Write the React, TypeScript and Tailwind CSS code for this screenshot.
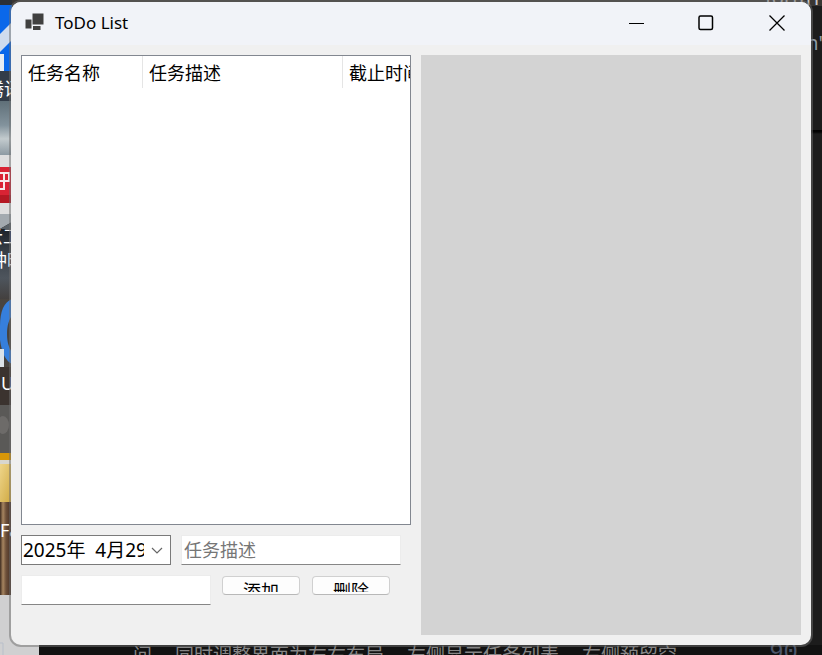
import { useState } from "react";

const columns = [
  { title: "任务名称", width: "w-[121px]" },
  { title: "任务描述", width: "w-[200px]" },
  { title: "截止时间", width: "w-[150px]" },
];

const chatLine = ["问，", "同时调整界面为左右布局，", "左侧显示任务列表，", "右侧预留空"];

const DesktopEdge = () => (
  <svg
    className="absolute left-0 top-0"
    width="39"
    height="655"
    viewBox="0 0 39 655"
    aria-hidden="true"
  >
    <defs>
      <linearGradient id="sky" x1="0" y1="0" x2="0" y2="1">
        <stop offset="0" stopColor="#5f6f78" />
        <stop offset="0.45" stopColor="#83939d" />
        <stop offset="0.7" stopColor="#c3cbce" />
        <stop offset="1" stopColor="#8d9aa3" />
      </linearGradient>
      <linearGradient id="rock" x1="0" y1="0" x2="0" y2="1">
        <stop offset="0" stopColor="#1c2229" />
        <stop offset="0.3" stopColor="#363d45" />
        <stop offset="0.7" stopColor="#4e555d" />
        <stop offset="1" stopColor="#43403f" />
      </linearGradient>
      <linearGradient id="folder" x1="0" y1="0" x2="1" y2="1">
        <stop offset="0" stopColor="#eed58b" />
        <stop offset="1" stopColor="#cfa840" />
      </linearGradient>
      <linearGradient id="wood" x1="0" y1="0" x2="1" y2="0">
        <stop offset="0" stopColor="#3d2b20" />
        <stop offset="0.25" stopColor="#a78560" />
        <stop offset="0.5" stopColor="#6d503a" />
        <stop offset="1" stopColor="#3c2820" />
      </linearGradient>
    </defs>
    <rect width="12" height="6" fill="#2b3036" />
    <rect y="5" width="12" height="66" fill="#0a68ea" />
    <path d="M0 34 12 22v18L0 52z" fill="#cfdcee" />
    <rect y="54" width="4" height="20" fill="#e8edf3" />
    <rect y="71" width="12" height="31" fill="#323c49" />
    <rect y="101" width="12" height="54" fill="url(#sky)" />
    <rect y="155" width="12" height="59" fill="#dededf" />
    <rect y="167" width="12" height="36" fill="#d92334" />
    <rect y="195" width="12" height="8" fill="#b51824" />
    <path d="M0 173h9v8H0M4 173v16H0" fill="none" stroke="#f6e9ea" strokeWidth="2" />
    <path d="M0 214h12v8L0 229z" fill="#a3aab0" />
    <path d="M12 222v8H0v-1z" fill="#5a6269" />
    <rect y="229" width="12" height="70" fill="url(#rock)" />
    <rect y="299" width="12" height="68" fill="#49443f" />
    <path
      d="M12 299C4 302 0 311 0 326v14c2 14 6 21 12 24v-12c-3-4-5-10-5-18s2-15 5-18z"
      fill="#367fdc"
    />
    <rect y="349" width="4" height="18" fill="#dce2e7" />
    <rect y="367" width="12" height="38" fill="#3b332f" />
    <rect y="405" width="12" height="48" fill="#5a5957" />
    <ellipse cx="3" cy="425" rx="6" ry="9" fill="#6d6b69" />
    <rect y="453" width="12" height="7" fill="#d79608" />
    <rect y="460" width="12" height="4" fill="#d8d6cf" />
    <rect y="464" width="12" height="38" fill="url(#folder)" />
    <rect y="502" width="12" height="93" fill="url(#wood)" />
    <rect y="595" width="39" height="60" fill="#d0d0d1" />
    <path d="M0 643h3v12" fill="none" stroke="#b8bfca" />
  </svg>
);

const Backdrop = () => (
  <div className="absolute inset-0 overflow-hidden bg-[#1c1c1c]" aria-hidden="true">
    <div className="absolute inset-x-0 top-0 h-1.5 bg-[#393633]" />
    <div className="absolute right-0 top-[130px] h-1 w-3 bg-gradient-to-b from-black to-[#1c1c1c]" />
    <div className="absolute inset-x-0 bottom-0 h-2.5 bg-[#121212]" />
    <DesktopEdge />
    <div className="absolute left-[-14px] top-[77px] whitespace-nowrap text-[18px] leading-6 text-white">
      腾讯
    </div>
    <div className="absolute left-[-15px] top-[224px] whitespace-nowrap text-[18px] leading-6 text-white">
      云工
    </div>
    <div className="absolute left-[-11px] top-[248px] whitespace-nowrap text-[18px] leading-6 text-white">
      钟时
    </div>
    <div className="absolute left-px top-[371px] text-[18px] leading-6 text-white">U</div>
    <div className="absolute left-0 top-[518px] text-[18px] leading-6 text-white">Fa</div>
    <div className="absolute right-0 top-[-14px] text-[20px] leading-6 text-[#c8c8c8]">
      formT
    </div>
    <div className="absolute right-[-1px] top-[31px] text-[20px] leading-6 text-[#8f9aa5]">
      n'
    </div>
    <div className="absolute left-[133px] top-full -mt-3 flex gap-1 whitespace-nowrap text-[19px] leading-6 text-[#858585]">
      {chatLine.map((part) => (
        <span key={part}>{part}</span>
      ))}
    </div>
    <div className="absolute right-6 top-full -mt-4 font-['Liberation_Mono'] text-[24px] leading-7 text-[#4c566b]">
      90
    </div>
  </div>
);

const TitleBar = () => (
  <header className="flex h-[43px] items-center bg-[#f1f3f8] pl-3.5">
    <svg className="mb-1" width="19" height="18" viewBox="0 0 19 18" aria-hidden="true">
      <path d="M7.500.5h11v11h-11zM.5 6.500h6v9h-6zM8 13h7.500v4H8z" fill="#404040" />
    </svg>
    <h1 className="mb-0.5 ml-[11px] flex-1 text-[17px] leading-6 text-black">ToDo List</h1>
    <div className="flex h-full pb-0.5">
      <button aria-label="最小化" className="flex w-[70px] items-center justify-center pl-0.5">
        <svg width="16" height="16" viewBox="0 0 16 16">
          <path d="M0 8.500h15" stroke="#000" />
        </svg>
      </button>
      <button aria-label="最大化" className="flex w-[70px] items-center justify-center">
        <svg width="16" height="16" viewBox="0 0 16 16" fill="none">
          <rect
            x="1"
            y="1"
            width="13.500"
            height="13.500"
            rx="1.500"
            stroke="#000"
            strokeWidth="1.500"
          />
        </svg>
      </button>
      <button aria-label="关闭" className="flex w-[70px] items-center justify-center pl-0.5">
        <svg width="16" height="16" viewBox="0 0 16 16">
          <path d="M.5.5l15 15M15.500.5l-15 15" stroke="#000" strokeWidth="1.300" />
        </svg>
      </button>
    </div>
  </header>
);

const TaskList = () => (
  <div className="flex-1 overflow-hidden border border-[#828790] bg-white">
    <table className="w-[471px] table-fixed border-separate border-spacing-0">
      <thead>
        <tr>
          {columns.map((column) => (
            <th
              key={column.title}
              scope="col"
              className={`${column.width} h-8 border-r border-[#e5e5e5] pl-1.5 pt-0.5 text-left text-[18px] font-normal leading-6 text-black`}
            >
              {column.title}
            </th>
          ))}
        </tr>
      </thead>
      <tbody />
    </table>
  </div>
);

const SmallButton = ({ label }: { label: string }) => (
  <button className="mt-px flex h-[19px] w-[78px] justify-center rounded-[4px] border border-[#d0d0d0] border-b-[#b8b8b8] bg-[#fdfdfd] pt-0.5">
    <span className="h-[13px] overflow-hidden text-[18px] leading-6 text-black">{label}</span>
  </button>
);

export default function App() {
  const [date, setDate] = useState("2025年  4月29日");
  const [description, setDescription] = useState("");
  const [name, setName] = useState("");

  return (
    <div className="relative flex min-h-screen flex-col px-[11px] pb-2.5 pt-0.5 font-['Noto_Sans','Noto_Sans_CJK_SC',sans-serif]">
      <Backdrop />
      <div className="relative flex flex-1 flex-col overflow-hidden rounded-[10px] bg-[#f0f0f0] shadow-[0_0_0_2px_rgba(110,110,110,0.5)]">
        <TitleBar />
        <main className="grid flex-1 grid-cols-[39fr_38fr] gap-2.5 p-2.5">
          <div className="flex min-w-0 flex-col gap-2.5 pb-[30px]">
            <TaskList />
            <div className="flex gap-2.5">
              <div className="flex h-[30px] w-[150px] items-center border border-[#7a7a7a] bg-white">
                <input
                  aria-label="截止时间"
                  className="w-[122px] whitespace-pre bg-transparent pl-px text-[19px] leading-6 text-black outline-none"
                  value={date}
                  onChange={(e) => setDate(e.target.value)}
                />
                <button aria-label="选择日期" className="flex flex-1 justify-center">
                  <svg width="12" height="7" viewBox="0 0 12 7" fill="none">
                    <path d="M1 1l5 5 5-5" stroke="#666" strokeWidth="1.200" />
                  </svg>
                </button>
              </div>
              <input
                aria-label="任务描述"
                placeholder="任务描述"
                className="mr-2.5 h-[30px] min-w-0 flex-1 border border-[#ececec] border-b-[#868686] bg-white px-0.5 text-[18px] leading-6 text-black outline-none placeholder:text-[#767676]"
                value={description}
                onChange={(e) => setDescription(e.target.value)}
              />
            </div>
            <div className="flex items-start gap-3">
              <input
                aria-label="任务名称"
                className="-mr-px h-[30px] w-[190px] border border-[#ececec] border-b-[#868686] bg-white px-0.5 text-[18px] leading-6 text-black outline-none"
                value={name}
                onChange={(e) => setName(e.target.value)}
              />
              <SmallButton label="添加" />
              <SmallButton label="删除" />
            </div>
          </div>
          <section aria-label="预留区域" className="bg-[#d3d3d3]" />
        </main>
      </div>
    </div>
  );
}
